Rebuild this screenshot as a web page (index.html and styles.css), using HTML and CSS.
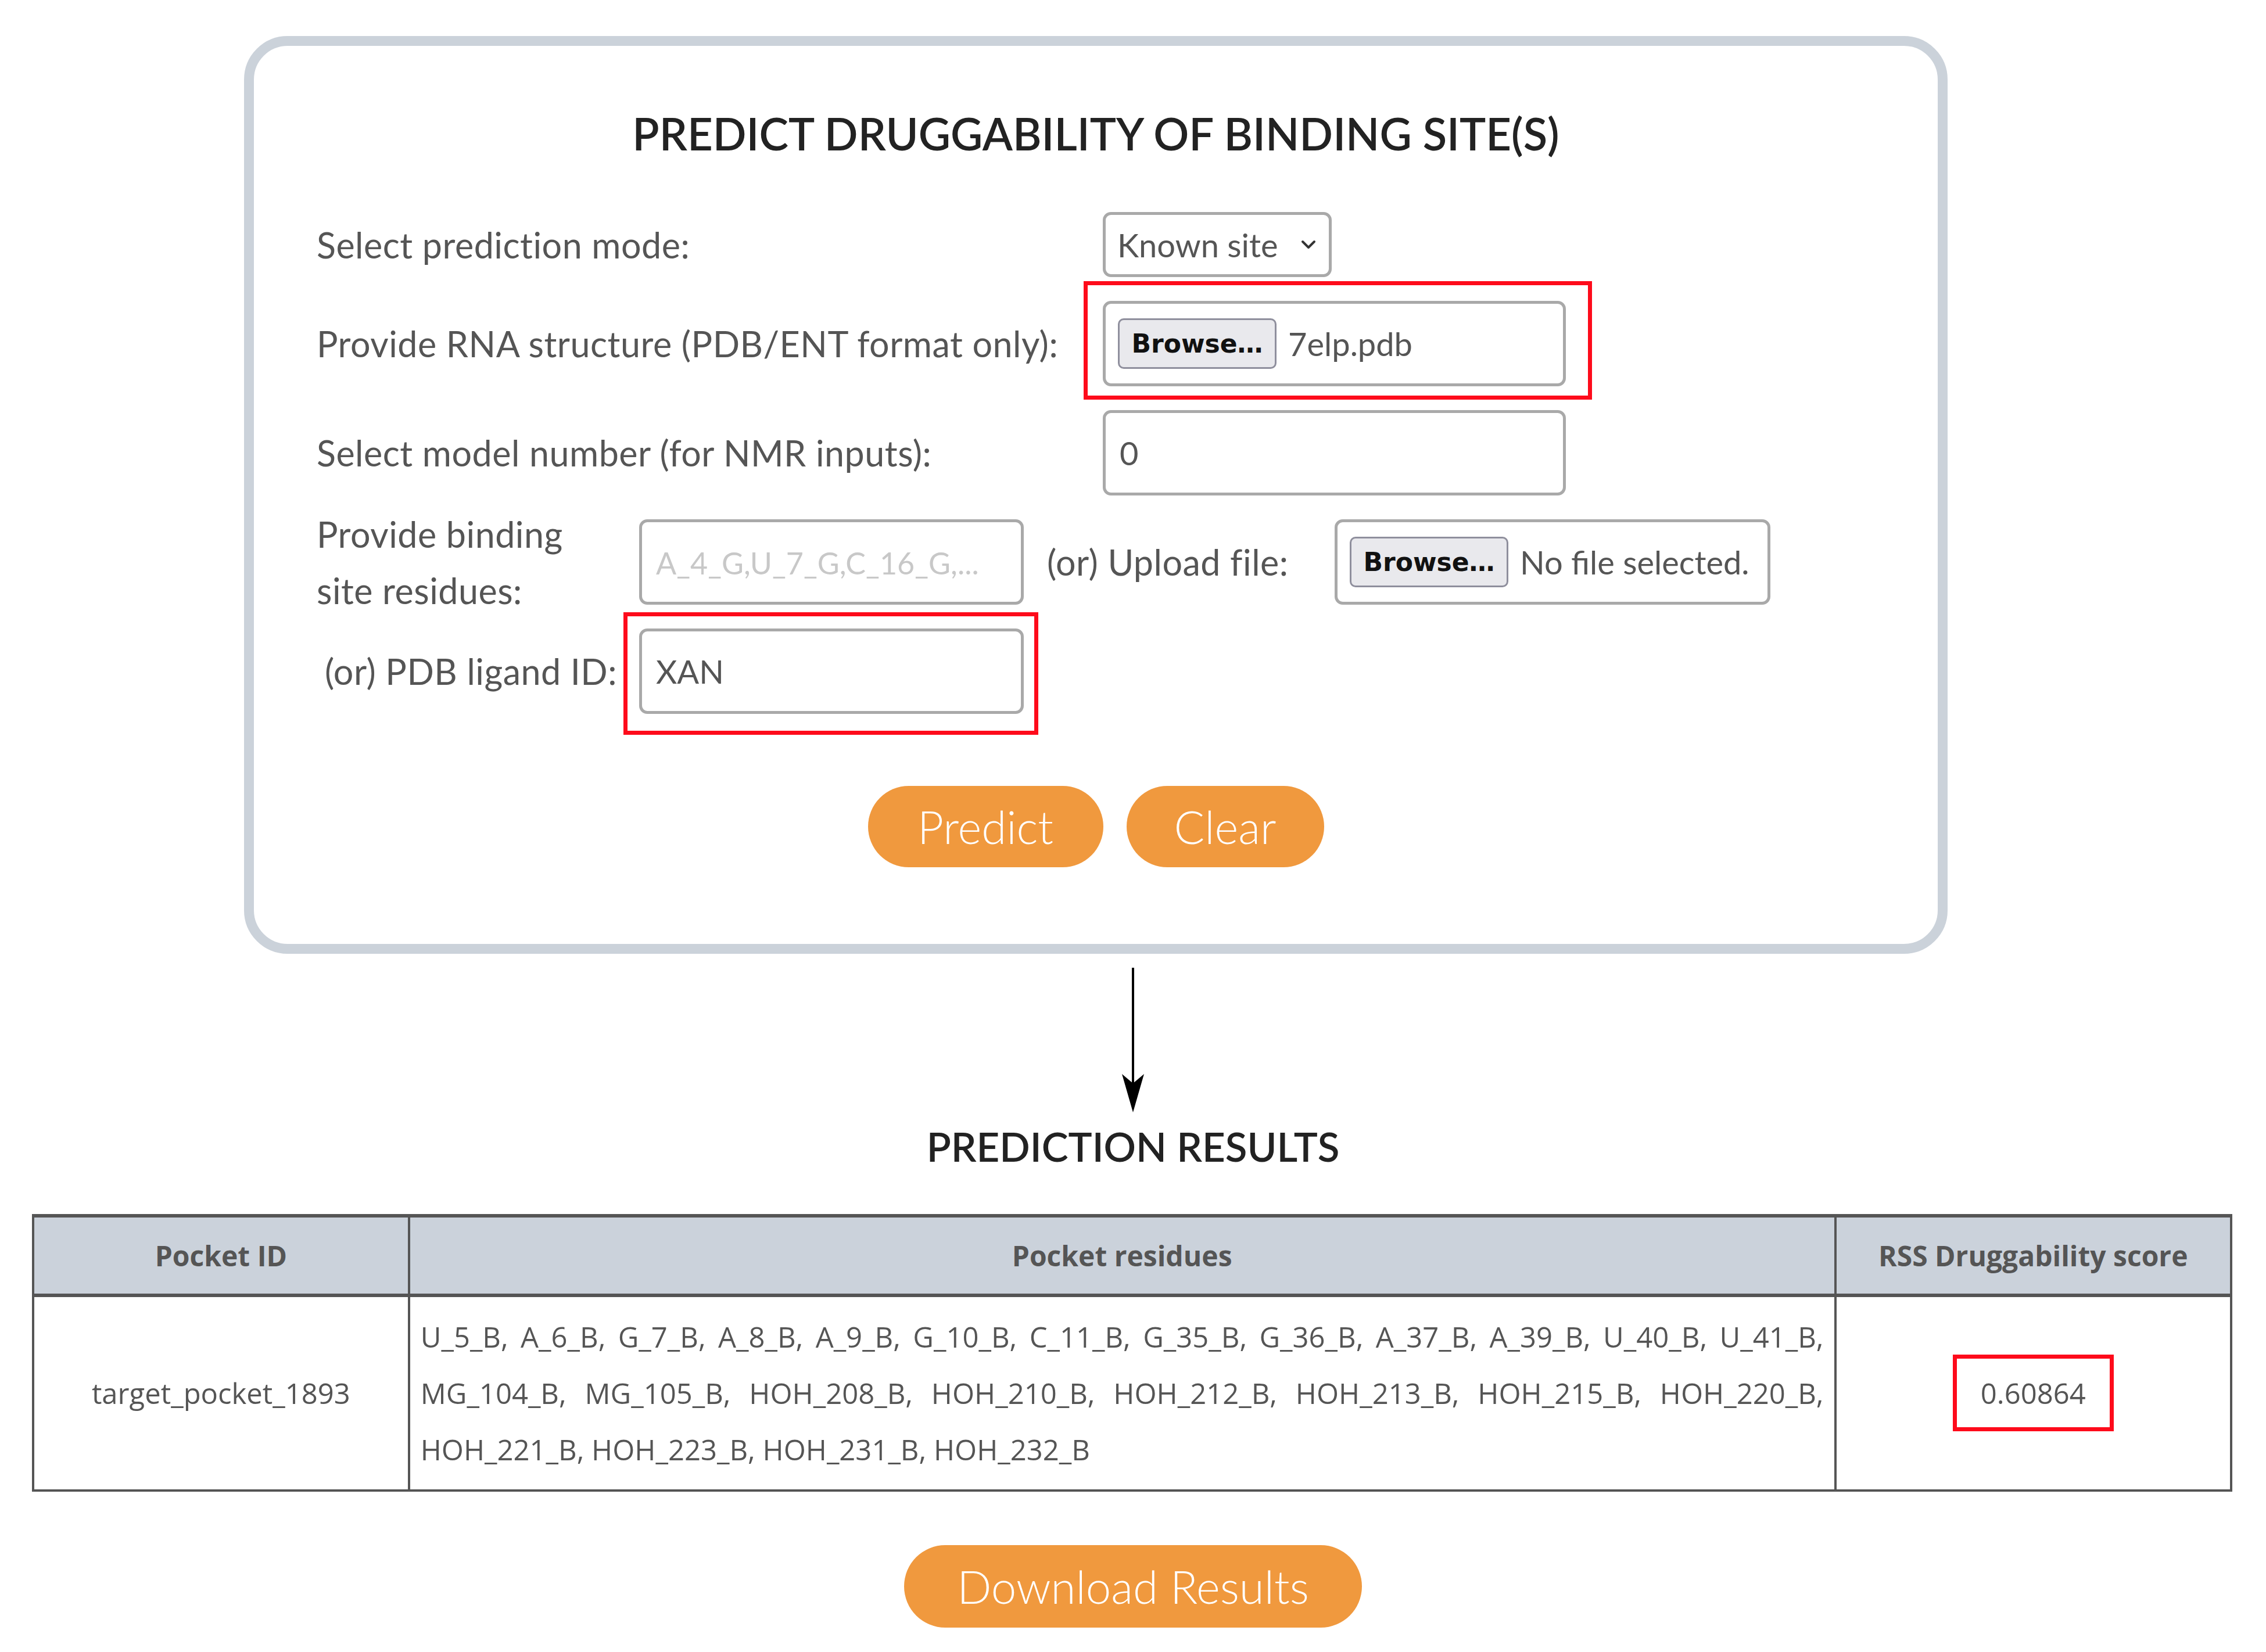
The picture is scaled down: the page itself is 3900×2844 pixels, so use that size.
FILE: index.html
```html
<!DOCTYPE html>
<html lang="en">
<head>
<meta charset="utf-8">
<title>Predict druggability of binding site(s)</title>
<link rel="stylesheet" href="styles.css">
</head>
<body>
<div class="card">
  <h1 class="title">PREDICT DRUGGABILITY OF BINDING SITE(S)</h1>
  <div class="form">
    <div class="row">
      <span class="lbl lbl-wide">Select prediction mode:</span>
      <div class="select"><span>Known site</span><svg class="chev" viewBox="0 0 26 16"><path d="M3 3 L13 13 L23 3" fill="none" stroke="#333" stroke-width="4" stroke-linecap="round" stroke-linejoin="round"/></svg></div>
    </div>
    <div class="row">
      <span class="lbl lbl-wide">Provide RNA structure (PDB/ENT format only):</span>
      <div class="mark mark-a">
        <div class="file file-wide"><span class="browse">Browse…</span><span class="fname">7elp.pdb</span></div>
      </div>
    </div>
    <div class="row">
      <span class="lbl lbl-wide">Select model number (for NMR inputs):</span>
      <input class="text text-wide" type="text" value="0">
    </div>
    <div class="row row-fixed">
      <span class="lbl lbl-narrow">Provide binding<br>site residues:</span>
      <input class="text text-narrow" type="text" placeholder="A_4_G,U_7_G,C_16_G,...">
      <span class="lbl lbl-or">(or) Upload file:</span>
      <div class="file file-narrow"><span class="browse">Browse…</span><span class="fname">No file selected.</span></div>
    </div>
    <div class="row row-fixed">
      <span class="lbl lbl-narrow lbl-right">(or) PDB ligand ID:</span>
      <div class="mark mark-b"><input class="text text-narrow" type="text" value="XAN"></div>
    </div>
  </div>
  <div class="actions">
    <button class="btn btn-predict">Predict</button>
    <button class="btn btn-clear">Clear</button>
  </div>
</div>

<svg class="arrow" viewBox="0 0 40 250">
  <line x1="20" y1="0" x2="20" y2="200" stroke="#000" stroke-width="4"/>
  <polygon points="1,183 20,199 39,183 20,249" fill="#000"/>
</svg>

<h2 class="results-title">PREDICTION RESULTS</h2>

<table class="results">
  <colgroup>
    <col class="col-id">
    <col class="col-res">
    <col class="col-score">
  </colgroup>
  <thead>
    <tr>
      <th>Pocket ID</th>
      <th>Pocket residues</th>
      <th>RSS Druggability score</th>
    </tr>
  </thead>
  <tbody>
    <tr>
      <td>target_pocket_1893</td>
      <td class="residues">
        <span class="res-line">U_5_B, A_6_B, G_7_B, A_8_B, A_9_B, G_10_B, C_11_B, G_35_B, G_36_B, A_37_B, A_39_B, U_40_B, U_41_B,</span>
        <span class="res-line">MG_104_B, MG_105_B, HOH_208_B, HOH_210_B, HOH_212_B, HOH_213_B, HOH_215_B, HOH_220_B,</span>
        <span class="res-line res-line-last">HOH_221_B, HOH_223_B, HOH_231_B, HOH_232_B</span>
      </td>
      <td><span class="score">0.60864</span></td>
    </tr>
  </tbody>
</table>

<button class="btn btn-download">Download Results</button>
</body>
</html>
```

FILE: styles.css
```css
html, body {
  margin: 0;
  background: #ffffff;
}

body {
  padding: 62px 0 40px;
  font-family: Lato, "Liberation Sans", sans-serif;
}

.card {
  box-sizing: border-box;
  width: 2932px;
  height: 1580px;
  margin-left: 420px;
  border: 17px solid #cbd2da;
  border-radius: 75px;
  padding-top: 101px;
  background: #fff;
}

.title {
  margin: 0;
  text-align: center;
  font-family: Lato, sans-serif;
  font-weight: 600;
  font-size: 76px;
  line-height: 100px;
  color: #222;
}

.form {
  margin-top: 85px;
  padding-left: 108px;
  display: flex;
  flex-direction: column;
  gap: 41px;
}

.row {
  display: flex;
  align-items: center;
}

.row-fixed {
  height: 147px;
}

.lbl {
  font-family: Lato, sans-serif;
  font-weight: 400;
  font-size: 61px;
  letter-spacing: 0.5px;
  line-height: 97px;
  color: #555;
  flex: none;
}

.lbl-wide {
  width: 1353px;
}

.lbl-narrow {
  width: 555px;
}

.lbl-right {
  box-sizing: border-box;
  text-align: right;
  padding-right: 38px;
}

.lbl-or {
  margin-left: 40px;
  width: 495px;
}

.select {
  box-sizing: border-box;
  width: 394px;
  height: 112px;
  border: 5px solid #a9a9a9;
  border-radius: 14px;
  display: flex;
  align-items: center;
  justify-content: space-between;
  padding: 0 22px 0 20px;
  font-family: Lato, sans-serif;
  font-size: 56px;
  color: #555;
}

.chev {
  width: 26px;
  height: 16px;
}

.file {
  box-sizing: border-box;
  height: 147px;
  border: 5px solid #a9a9a9;
  border-radius: 14px;
  display: flex;
  align-items: center;
  padding-left: 21px;
  font-family: Lato, sans-serif;
  font-size: 56px;
  color: #555;
  background: #fff;
}

.file-wide {
  width: 797px;
}

.file-narrow {
  width: 750px;
}

.browse {
  box-sizing: border-box;
  flex: none;
  width: 273px;
  height: 87px;
  border: 3px solid #8f8f9d;
  border-radius: 10px;
  background: #e9e9ed;
  display: flex;
  align-items: center;
  justify-content: center;
  font-family: "DejaVu Sans", sans-serif;
  font-weight: 700;
  font-size: 44px;
  color: #111;
  margin-right: 20px;
}

.fname {
  white-space: nowrap;
}

.text {
  box-sizing: border-box;
  height: 147px;
  margin: 0;
  border: 5px solid #a9a9a9;
  border-radius: 14px;
  padding: 0 0 0 24px;
  font-family: Lato, sans-serif;
  font-size: 56px;
  color: #555;
  background: #fff;
  outline: none;
}

.text::placeholder {
  color: #c8c8c8;
  font-size: 52px;
}

.text-wide {
  width: 797px;
}

.text-narrow {
  width: 662px;
}

.mark {
  position: relative;
  display: flex;
}

.mark::after {
  content: "";
  position: absolute;
  border: 7px solid #fe0b1b;
  pointer-events: none;
}

.mark-a::after {
  top: -34px;
  right: -45px;
  bottom: -23px;
  left: -33px;
}

.mark-b::after {
  top: -28px;
  right: -25px;
  bottom: -36px;
  left: -27px;
}

.actions {
  display: flex;
  justify-content: center;
  gap: 40px;
  margin-top: 124px;
}

.btn {
  height: 140px;
  border: none;
  border-radius: 70px;
  background: #f0993e;
  color: #fff;
  font-family: Lato, sans-serif;
  font-weight: 300;
  font-size: 78px;
  padding: 0;
}

.btn-predict {
  width: 405px;
}

.btn-clear {
  width: 340px;
}

.arrow {
  display: block;
  width: 40px;
  height: 250px;
  margin: 24px auto 0;
}

.results-title {
  margin: 18px 0 0;
  text-align: center;
  font-family: Lato, sans-serif;
  font-weight: 600;
  font-size: 69px;
  line-height: 80px;
  color: #222;
}

.results {
  margin: 76px 0 0 55px;
  width: 3787px;
  border-collapse: collapse;
  font-family: "Open Sans", sans-serif;
  color: #555;
}

.col-id {
  width: 647px;
}

.col-res {
  width: 2458px;
}

.col-score {
  width: 682px;
}

.results th {
  height: 131px;
  background: #cbd2db;
  border: 4px solid #555;
  border-top-width: 6px;
  border-bottom-width: 6px;
  font-weight: 700;
  font-size: 48px;
  color: #555;
  padding: 0;
}

.results td {
  border: 4px solid #555;
  font-size: 49px;
  line-height: 97px;
  text-align: center;
  vertical-align: middle;
  padding: 0;
}

.results td.residues {
  text-align: left;
  padding: 20px 18px 20px 18px;
}

.res-line {
  display: block;
  text-align: justify;
  text-align-last: justify;
}

.res-line-last {
  text-align-last: left;
}

.score {
  position: relative;
  display: inline-block;
  line-height: 56px;
}

.score::after {
  content: "";
  position: absolute;
  top: -38px;
  right: -48px;
  bottom: -38px;
  left: -48px;
  border: 7px solid #fe0b1b;
}

.btn-download {
  display: block;
  width: 788px;
  height: 142px;
  border-radius: 71px;
  margin: 92px auto 0;
}
```
